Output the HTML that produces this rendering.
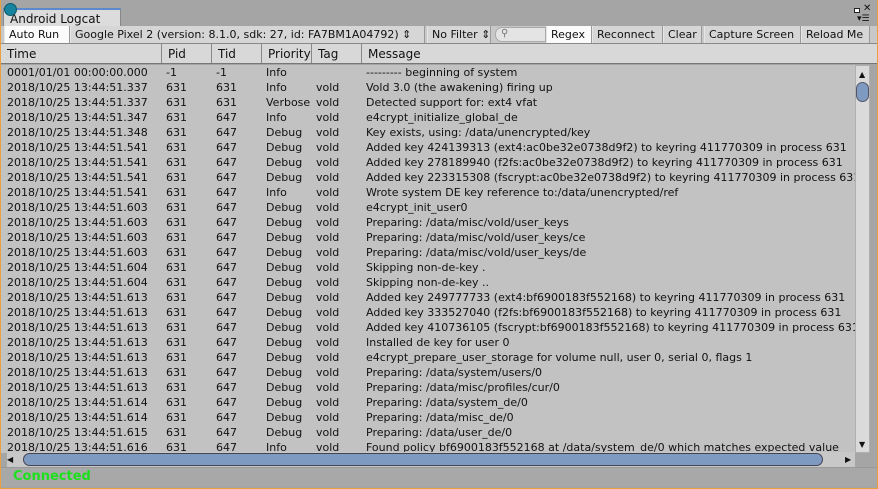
<!DOCTYPE html><html><head><style>
*{margin:0;padding:0;box-sizing:border-box}
body{width:878px;height:489px;overflow:hidden;background:#a5a5a5;font-family:"DejaVu Sans","Liberation Sans",sans-serif;font-size:11px;color:#111;position:relative}
.frame{position:absolute;left:0;top:0;width:878px;height:489px;border:1px solid #e8a040;border-top:none}
.tab{position:absolute;left:3px;top:8px;width:118px;height:19px;background:#dcdcdc;border:1px solid #888;border-bottom:none;border-top:2px solid #5a8acb;padding:2px 0 0 6px;font-size:12px}
.dot{position:absolute;left:4px;top:3px;width:13px;height:13px;border-radius:50%;background:#17839d;border:1px solid #0d5a6b}
.tb{position:absolute;top:26px;left:1px;width:876px;height:18px;background:#c8c8c8;border-bottom:1px solid #888}
.b{position:absolute;top:0;height:17px;border-right:1px solid #999;border-left:1px solid #e6e6e6;padding:2px 0 0 4px;white-space:nowrap;background:#d6d6d6}
.hd{position:absolute;top:44px;left:1px;width:876px;height:20px;background:#d8d8d8;border-bottom:1px solid #777}
.h{position:absolute;top:0;height:19px;border-right:1px solid #888;padding:3px 0 0 6px;font-size:12px}
.list{position:absolute;top:65px;left:1px;width:854px;height:388px;background:#c2c2c2;overflow:hidden}
.r{position:absolute;left:0;height:15px;white-space:nowrap;width:900px}
.r span{position:absolute;top:1px}
.vs{position:absolute;left:855px;top:65px;width:15px;height:388px;background:#dadada;border:1px solid #b0b0b0}
.hs{position:absolute;left:7px;top:452px;width:848px;height:15px;background:#c8c8c8}
.st{position:absolute;left:1px;top:467px;width:876px;height:20px;background:#a8a8a8;border-top:1px solid #999}
</style></head><body>
<div class="tab">Android Logcat</div>
<div class="dot"></div>
<div style="position:absolute;left:854px;top:8px;width:6px;height:5px;border:1px solid #222;background:#fff"></div>
<div style="position:absolute;left:863px;top:3px;font-size:10px">✕</div>
<div style="position:absolute;left:857px;top:14px;font-size:9px">▾☰</div>
<div class="tb">
<div class="b" style="left:3px;width:66px;background:#fbfbfb">Auto Run</div>
<div class="b" style="left:69px;width:355px">Google Pixel 2 (version: 8.1.0, sdk: 27, id: FA7BM1A04792) ⇕</div>
<div class="b" style="left:426px;width:64px">No Filter ⇕</div>
<div style="position:absolute;left:494px;top:1px;width:51px;height:15px;background:#e4e4e4;border:1px solid #aaa;border-radius:7px 0 0 7px;padding-left:5px;font-size:10px;color:#777">⚲</div>
<div class="b" style="left:545px;width:46px;background:#fbfbfb">Regex</div>
<div class="b" style="left:591px;width:71px">Reconnect</div>
<div class="b" style="left:662px;width:39px">Clear</div>
<div class="b" style="left:703px;width:97px">Capture Screen</div>
<div class="b" style="left:800px;width:69px">Reload Me</div>
</div>
<div class="hd">
<div class="h" style="left:0;width:161px">Time</div>
<div class="h" style="left:161px;width:50px">Pid</div>
<div class="h" style="left:211px;width:50px">Tid</div>
<div class="h" style="left:261px;width:50px">Priority</div>
<div class="h" style="left:311px;width:50px">Tag</div>
<div class="h" style="left:361px;width:515px;border-right:none">Message</div>
</div>
<div class="list" id="L"></div>
<div class="vs"><div style="position:absolute;left:3px;top:4px;font-size:8px">▲</div><div style="position:absolute;left:0;top:16px;width:13px;height:20px;border-radius:7px;background:#7f9ac0;border:1px solid #556"></div><div style="position:absolute;left:3px;bottom:3px;font-size:8px">▼</div></div>
<div class="hs"><div style="position:absolute;left:0;top:3px;font-size:8px">◀</div><div style="position:absolute;left:16px;top:1px;width:800px;height:13px;border-radius:7px;background:#7f9ac0;border:1px solid #445"></div><div style="position:absolute;left:838px;top:3px;font-size:8px">▶</div></div>
<div class="st"><span style="position:absolute;left:12px;top:1px;color:#1de01d;font-weight:bold;font-size:13px">Connected</span></div>
<div class="frame"></div>
<script>
var d=[["0001/01/01 00:00:00.000","-1","-1","Info","","--------- beginning of system"],
["2018/10/25 13:44:51.337","631","631","Info","vold","Vold 3.0 (the awakening) firing up"],
["2018/10/25 13:44:51.337","631","631","Verbose","vold","Detected support for: ext4 vfat"],
["2018/10/25 13:44:51.347","631","647","Info","vold","e4crypt_initialize_global_de"],
["2018/10/25 13:44:51.348","631","647","Debug","vold","Key exists, using: /data/unencrypted/key"],
["2018/10/25 13:44:51.541","631","647","Debug","vold","Added key 424139313 (ext4:ac0be32e0738d9f2) to keyring 411770309 in process 631"],
["2018/10/25 13:44:51.541","631","647","Debug","vold","Added key 278189940 (f2fs:ac0be32e0738d9f2) to keyring 411770309 in process 631"],
["2018/10/25 13:44:51.541","631","647","Debug","vold","Added key 223315308 (fscrypt:ac0be32e0738d9f2) to keyring 411770309 in process 631"],
["2018/10/25 13:44:51.541","631","647","Info","vold","Wrote system DE key reference to:/data/unencrypted/ref"],
["2018/10/25 13:44:51.603","631","647","Debug","vold","e4crypt_init_user0"],
["2018/10/25 13:44:51.603","631","647","Debug","vold","Preparing: /data/misc/vold/user_keys"],
["2018/10/25 13:44:51.603","631","647","Debug","vold","Preparing: /data/misc/vold/user_keys/ce"],
["2018/10/25 13:44:51.603","631","647","Debug","vold","Preparing: /data/misc/vold/user_keys/de"],
["2018/10/25 13:44:51.604","631","647","Debug","vold","Skipping non-de-key ."],
["2018/10/25 13:44:51.604","631","647","Debug","vold","Skipping non-de-key .."],
["2018/10/25 13:44:51.613","631","647","Debug","vold","Added key 249777733 (ext4:bf6900183f552168) to keyring 411770309 in process 631"],
["2018/10/25 13:44:51.613","631","647","Debug","vold","Added key 333527040 (f2fs:bf6900183f552168) to keyring 411770309 in process 631"],
["2018/10/25 13:44:51.613","631","647","Debug","vold","Added key 410736105 (fscrypt:bf6900183f552168) to keyring 411770309 in process 631"],
["2018/10/25 13:44:51.613","631","647","Debug","vold","Installed de key for user 0"],
["2018/10/25 13:44:51.613","631","647","Debug","vold","e4crypt_prepare_user_storage for volume null, user 0, serial 0, flags 1"],
["2018/10/25 13:44:51.613","631","647","Debug","vold","Preparing: /data/system/users/0"],
["2018/10/25 13:44:51.613","631","647","Debug","vold","Preparing: /data/misc/profiles/cur/0"],
["2018/10/25 13:44:51.614","631","647","Debug","vold","Preparing: /data/system_de/0"],
["2018/10/25 13:44:51.614","631","647","Debug","vold","Preparing: /data/misc_de/0"],
["2018/10/25 13:44:51.615","631","647","Debug","vold","Preparing: /data/user_de/0"],
["2018/10/25 13:44:51.616","631","647","Info","vold","Found policy bf6900183f552168 at /data/system_de/0 which matches expected value"]];
var x=[6,165,215,265,315,365],h="";
d.forEach(function(r,i){h+='<div class="r" style="top:'+(i*15)+'px">';r.forEach(function(c,j){h+='<span style="left:'+x[j]+'px">'+c+'</span>'});h+='</div>'});
document.getElementById("L").innerHTML=h;
</script>
</body></html>
